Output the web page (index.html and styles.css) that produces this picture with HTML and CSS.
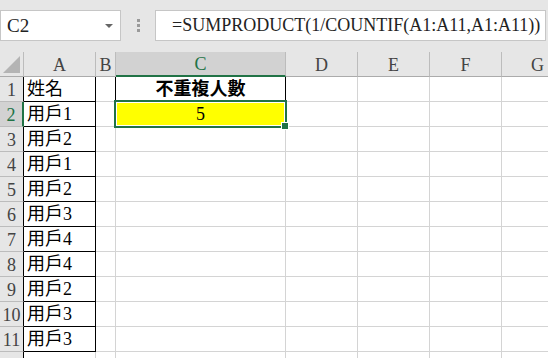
FILE: index.html
```html
<!DOCTYPE html>
<html>
<head>
    <title>Excel</title>
    <link rel="stylesheet" href="styles.css">
</head>
<body>
    <div class="toolbar">
        <div class="namebox">
            <span>C2</span>
            <span class="arrow"></span>
        </div>
        <div class="dots"><i></i><i></i><i></i></div>
        <div class="formula">=SUMPRODUCT(1/COUNTIF(A1:A11,A1:A11))</div>
    </div>

    <div class="sheet">
        <div class="hd corner"><span class="tri"></span></div>
        <div class="hd col">A</div>
        <div class="hd col">B</div>
        <div class="hd col active-col">C</div>
        <div class="hd col">D</div>
        <div class="hd col">E</div>
        <div class="hd col">F</div>
        <div class="hd col last">G</div>

        <div class="hd row">1</div>
        <div class="cell name first">姓名</div>
        <div class="cell bcol edge"></div>
        <div class="cell title">不重複人數</div>
        <div class="cell"></div><div class="cell"></div><div class="cell"></div><div class="cell last"></div>

        <div class="hd row active-row">2</div>
        <div class="cell name">用戶1</div>
        <div class="cell bcol"></div>
        <div class="cell result">5<span class="sel"><span class="handle"></span></span></div>
        <div class="cell"></div><div class="cell"></div><div class="cell"></div><div class="cell last"></div>

        <div class="hd row">3</div>
        <div class="cell name">用戶2</div>
        <div class="cell bcol"></div><div class="cell"></div>
        <div class="cell"></div><div class="cell"></div><div class="cell"></div><div class="cell last"></div>

        <div class="hd row">4</div>
        <div class="cell name">用戶1</div>
        <div class="cell bcol"></div><div class="cell"></div>
        <div class="cell"></div><div class="cell"></div><div class="cell"></div><div class="cell last"></div>

        <div class="hd row">5</div>
        <div class="cell name">用戶2</div>
        <div class="cell bcol"></div><div class="cell"></div>
        <div class="cell"></div><div class="cell"></div><div class="cell"></div><div class="cell last"></div>

        <div class="hd row">6</div>
        <div class="cell name">用戶3</div>
        <div class="cell bcol"></div><div class="cell"></div>
        <div class="cell"></div><div class="cell"></div><div class="cell"></div><div class="cell last"></div>

        <div class="hd row">7</div>
        <div class="cell name">用戶4</div>
        <div class="cell bcol"></div><div class="cell"></div>
        <div class="cell"></div><div class="cell"></div><div class="cell"></div><div class="cell last"></div>

        <div class="hd row">8</div>
        <div class="cell name">用戶4</div>
        <div class="cell bcol"></div><div class="cell"></div>
        <div class="cell"></div><div class="cell"></div><div class="cell"></div><div class="cell last"></div>

        <div class="hd row">9</div>
        <div class="cell name">用戶2</div>
        <div class="cell bcol"></div><div class="cell"></div>
        <div class="cell"></div><div class="cell"></div><div class="cell"></div><div class="cell last"></div>

        <div class="hd row">10</div>
        <div class="cell name">用戶3</div>
        <div class="cell bcol"></div><div class="cell"></div>
        <div class="cell"></div><div class="cell"></div><div class="cell"></div><div class="cell last"></div>

        <div class="hd row">11</div>
        <div class="cell name">用戶3</div>
        <div class="cell bcol"></div><div class="cell"></div>
        <div class="cell"></div><div class="cell"></div><div class="cell"></div><div class="cell last"></div>

        <div class="hd row"></div>
        <div class="cell"></div>
        <div class="cell"></div><div class="cell"></div>
        <div class="cell"></div><div class="cell"></div><div class="cell"></div><div class="cell last"></div>
    </div>
</body>
</html>
```

FILE: styles.css
```css
body {
    margin: 0;
    background-color: #fff;
    font-family: 'Liberation Serif', 'Noto Sans CJK TC', serif;
    overflow: hidden;
    width: 548px;
    height: 358px;
}

.toolbar {
    height: 52px;
    background-color: #e6e6e6;
    display: flex;
    align-items: flex-start;
    box-sizing: border-box;
    padding-top: 10px;
}

.namebox {
    width: 121px;
    height: 31px;
    box-sizing: border-box;
    background-color: #fff;
    border: 1px solid #c6c6c6;
    display: flex;
    align-items: center;
    justify-content: space-between;
    padding: 0 7px 0 6px;
    font-size: 19px;
    color: #222;
}

.arrow {
    width: 0;
    height: 0;
    border-left: 4px solid transparent;
    border-right: 4px solid transparent;
    border-top: 4px solid #666;
}

.dots {
    width: 34px;
    display: flex;
    flex-direction: column;
    align-items: center;
    gap: 2px;
    padding-top: 9px;
}

.dots i {
    display: block;
    width: 3px;
    height: 3px;
    background-color: #9a9a9a;
}

.formula {
    flex: 1;
    height: 31px;
    box-sizing: border-box;
    margin-right: 2px;
    background-color: #fff;
    border: 1px solid #c6c6c6;
    padding-left: 16px;
    font-size: 18px;
    line-height: 29px;
    color: #222;
    white-space: nowrap;
    overflow: hidden;
}

.sheet {
    display: grid;
    grid-template-columns: 24px 72px 20px 170px 72px 72px 72px 1fr;
    grid-template-rows: 25px;
    grid-auto-rows: 25px;
}

.hd {
    background-color: #e6e6e6;
    color: #444;
    font-size: 18px;
    box-sizing: border-box;
    border-right: 1px solid #bcbcbc;
    border-bottom: 1px solid #ababab;
    display: flex;
    align-items: center;
    justify-content: center;
}

.corner {
    position: relative;
}

.tri {
    position: absolute;
    right: 3px;
    bottom: 3px;
    width: 0;
    height: 0;
    border-left: 17px solid transparent;
    border-bottom: 17px solid #b4b4b4;
}

.col {
    padding-top: 2px;
}

.col.last {
    border-right: none;
    justify-content: flex-start;
    padding-left: 29px;
}

.active-col {
    background-color: #d2d2d2;
    color: #217346;
    border-bottom: 2px solid #217346;
}

.row {
    border-bottom: 1px solid #bcbcbc;
    border-right: 1px solid #000;
    font-size: 18px;
    padding-top: 2px;
}

.active-row {
    background-color: #d2d2d2;
    color: #217346;
    border-right: 2px solid #217346;
}

.cell {
    box-sizing: border-box;
    border-right: 1px solid #d4d4d4;
    border-bottom: 1px solid #d4d4d4;
    font-size: 18px;
    color: #000;
    display: flex;
    align-items: flex-end;
    padding-bottom: 1px;
    white-space: nowrap;
}

.cell.last {
    border-right: none;
}

.name {
    border-right: 1px solid #000;
    border-bottom: 1px solid #000;
    padding-left: 3px;
}

.bcol.edge {
    border-right: 1px solid #000;
}

.title {
    justify-content: center;
    font-weight: bold;
    border-right: 1px solid #000;
}

.result {
    position: relative;
    justify-content: center;
    background-color: #ffff00;
    box-shadow: inset 0 0 0 1px #fff;
}

.sel {
    position: absolute;
    left: -2px;
    top: -2px;
    right: -2px;
    bottom: -2px;
    border: 2px solid #217346;
}

.handle {
    position: absolute;
    right: -4px;
    bottom: -4px;
    width: 6px;
    height: 6px;
    background-color: #217346;
    border: 1px solid #fff;
}
```
